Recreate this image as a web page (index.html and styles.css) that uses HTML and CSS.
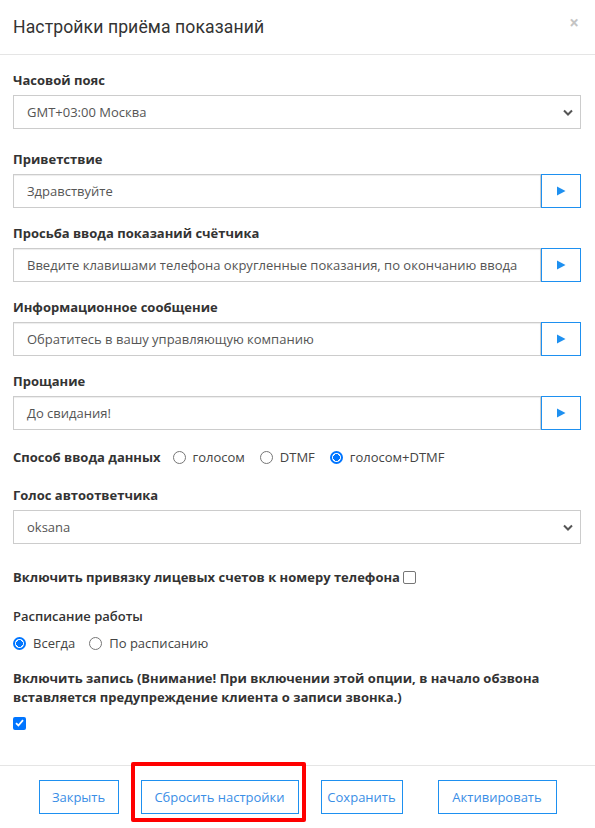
FILE: index.html
```html
<!DOCTYPE html>
<html lang="ru">
<head>
<meta charset="utf-8">
<title>Настройки приёма показаний</title>
<link rel="stylesheet" href="styles.css">
</head>
<body>
<div class="modal">
  <div class="modal-header">
    <h4 class="modal-title">Настройки приёма показаний</h4>
    <span class="close">×</span>
  </div>
  <div class="modal-body">
    <div class="group group-select">
      <div class="label">Часовой пояс</div>
      <div class="select"><span>GMT+03:00 Москва</span><svg class="chev" width="10" height="7" viewBox="0 0 10 7"><path d="M1 1.5 L5 5.5 L9 1.5" fill="none" stroke="#555" stroke-width="2"/></svg></div>
    </div>
    <div class="group">
      <div class="label">Приветствие</div>
      <div class="input-group"><div class="input">Здравствуйте</div><button class="play"><svg width="10" height="10" viewBox="0 0 10 10"><path d="M1 0.5 L9.5 5 L1 9.5 Z" fill="#1e90f0"/></svg></button></div>
    </div>
    <div class="group">
      <div class="label">Просьба ввода показаний счётчика</div>
      <div class="input-group"><div class="input">Введите клавишами телефона округленные показания, по окончанию ввода</div><button class="play"><svg width="10" height="10" viewBox="0 0 10 10"><path d="M1 0.5 L9.5 5 L1 9.5 Z" fill="#1e90f0"/></svg></button></div>
    </div>
    <div class="group">
      <div class="label">Информационное сообщение</div>
      <div class="input-group"><div class="input">Обратитесь в вашу управляющую компанию</div><button class="play"><svg width="10" height="10" viewBox="0 0 10 10"><path d="M1 0.5 L9.5 5 L1 9.5 Z" fill="#1e90f0"/></svg></button></div>
    </div>
    <div class="group">
      <div class="label">Прощание</div>
      <div class="input-group"><div class="input">До свидания!</div><button class="play"><svg width="10" height="10" viewBox="0 0 10 10"><path d="M1 0.5 L9.5 5 L1 9.5 Z" fill="#1e90f0"/></svg></button></div>
    </div>
    <div class="row-radio">
      <span class="label inline">Способ ввода данных</span>
      <label class="opt"><span class="radio"></span>голосом</label>
      <label class="opt"><span class="radio"></span>DTMF</label>
      <label class="opt"><span class="radio on"></span>голосом+DTMF</label>
    </div>
    <div class="group group-voice">
      <div class="label">Голос автоответчика</div>
      <div class="select"><span>oksana</span><svg class="chev" width="10" height="7" viewBox="0 0 10 7"><path d="M1 1.5 L5 5.5 L9 1.5" fill="none" stroke="#555" stroke-width="2"/></svg></div>
    </div>
    <div class="row-check">
      <span class="label inline">Включить привязку лицевых счетов к номеру телефона</span><span class="check"></span>
    </div>
    <div class="schedule">
      <div class="label medium">Расписание работы</div>
      <div class="opts">
        <label class="opt"><span class="radio on"></span>Всегда</label>
        <label class="opt"><span class="radio"></span>По расписанию</label>
      </div>
    </div>
    <div class="record">
      <div class="label tall">Включить запись (Внимание! При включении этой опции, в начало обзвона вставляется предупреждение клиента о записи звонка.)</div>
      <span class="check on"><svg width="9" height="8" viewBox="0 0 9 8"><path d="M1 4.2 L3.4 6.5 L8 1.2" fill="none" stroke="#fff" stroke-width="1.8"/></svg></span>
    </div>
  </div>
  <div class="modal-footer">
    <button class="btn b1">Закрыть</button>
    <span class="marked"><button class="btn b2">Сбросить настройки</button></span>
    <button class="btn b3">Сохранить</button>
    <button class="btn b4">Активировать</button>
  </div>
</div>
</body>
</html>
```
FILE: styles.css
```css
* { box-sizing: border-box; }
html, body { margin: 0; padding: 0; background: #fff; }
body {
  font-family: "Open Sans", "Noto Sans", sans-serif;
  color: #333;
  font-size: 13px;
  width: 595px;
  min-height: 828px;
}
.modal { width: 595px; }
.modal-header {
  height: 55px;
  border-bottom: 1px solid #e5e5e5;
  display: flex;
  align-items: center;
  justify-content: space-between;
  padding: 0 15px 0 13px;
}
.modal-title {
  margin: 0;
  font-family: Roboto, sans-serif;
  font-size: 17.6px;
  font-weight: 400;
  color: #333;
  letter-spacing: 0.1px;
}
.close {
  color: #c4c4c4;
  font-size: 17px;
  font-weight: 700;
  margin-top: -9px;
  margin-right: 1px;
}
.modal-body { padding: 16px 14px 0 13px; }
.label {
  font-weight: 700;
  font-size: 13px;
  line-height: 18px;
  color: #333;
}
.label.medium { font-weight: 600; }
.group { margin-bottom: 16px; }
.group .label { margin-bottom: 6px; }
.group-select { margin-bottom: 21px; }
.select {
  height: 34px;
  border: 1px solid #ccc;
  display: flex;
  align-items: center;
  justify-content: space-between;
  padding: 0 7px 0 13px;
  color: #555;
}
.input-group { display: flex; height: 34px; }
.input {
  flex: 1;
  border: 1px solid #ccc;
  box-shadow: inset 0 1px 1px rgba(0,0,0,0.075);
  display: flex;
  align-items: center;
  padding: 0 12px 0 13px;
  color: #555;
  white-space: nowrap;
  overflow: hidden;
}
.play {
  width: 40px;
  height: 34px;
  border: 1px solid #1e90f0;
  background: #fff;
  margin: 0;
  padding: 0;
  display: flex;
  align-items: center;
  justify-content: center;
}
.row-radio {
  display: flex;
  align-items: center;
  height: 22px;
  margin-bottom: 18px;
}
.opt {
  display: inline-flex;
  align-items: center;
  color: #444;
  margin-left: 15px;
}
.row-radio .opt:nth-of-type(1) { margin-left: 12px; }
.opts .opt:first-child { margin-left: 0; }
.opts .opt { margin-left: 14px; }
.radio {
  width: 13px;
  height: 13px;
  border: 1px solid #767676;
  border-radius: 50%;
  margin-right: 7px;
  display: inline-block;
}
.radio.on {
  border: 2px solid #0075ff;
  background: radial-gradient(circle, #0075ff 0 3.2px, #fff 3.6px);
}
.group-voice { margin-bottom: 24px; }
.row-check {
  display: flex;
  align-items: center;
  height: 18px;
  margin-bottom: 21px;
}
.check {
  width: 13px;
  height: 13px;
  border: 1px solid #767676;
  border-radius: 2px;
  margin-left: 3px;
  display: inline-flex;
  align-items: center;
  justify-content: center;
}
.check.on {
  border: none;
  background: #0075ff;
  margin-left: 0;
}
.schedule .label { margin-bottom: 9px; }
.opts { display: flex; height: 18px; align-items: center; margin-bottom: 17px; }
.label.tall { line-height: 19px; margin-bottom: 6px; }
.record { height: 63px; }
.modal-footer {
  margin-top: 33px;
  border-top: 1px solid #e5e5e5;
  padding: 14px 0 12px;
  display: flex;
  justify-content: center;
  align-items: center;
}
.btn {
  height: 34px;
  border: 1px solid #1e90f0;
  background: #fff;
  color: #3a8ee6;
  font-family: "Open Sans", sans-serif;
  font-size: 13px;
  padding: 0;
  margin: 0 11px;
}
.b1 { width: 80px; }
.b2 { width: 158px; }
.b3 { width: 82px; }
.b4 { width: 119px; margin-left: 24px; }
.marked { position: relative; display: inline-flex; }
.marked::after {
  content: "";
  position: absolute;
  left: 1px;
  right: 4px;
  top: -18px;
  bottom: -8px;
  border: 4px solid #f00;
  border-radius: 2px;
}
```
